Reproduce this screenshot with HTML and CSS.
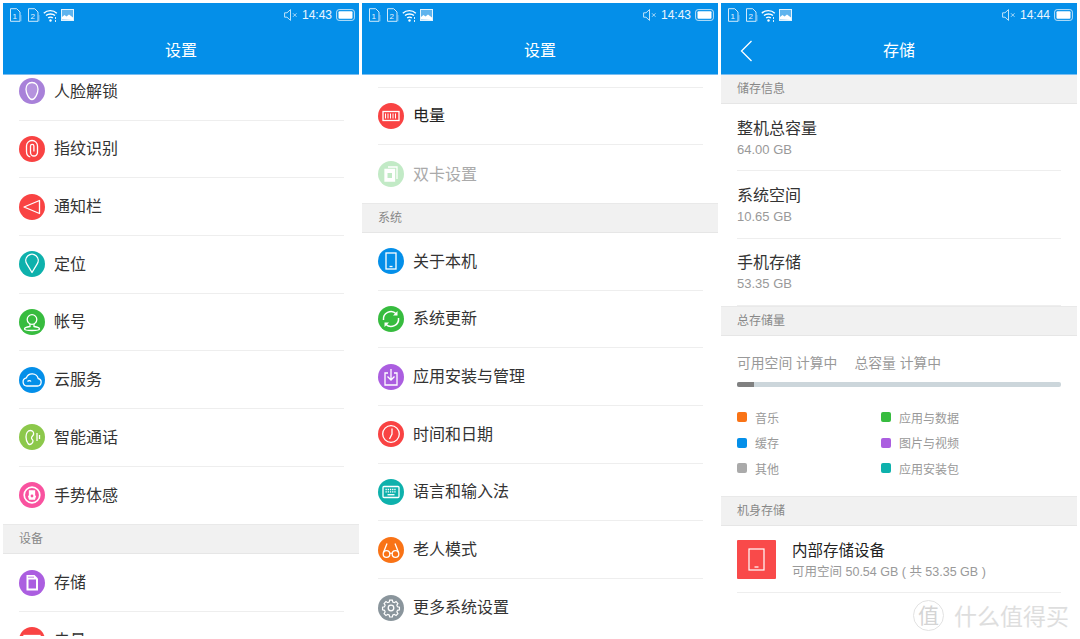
FILE: index.html
```html
<!DOCTYPE html>
<html lang="zh-CN">

<head>
    <meta http-equiv="Content-Type" content="text/html; charset=utf-8" />
    <title>设置</title>
    <link rel="stylesheet" href="styles.css">
</head>

<body>
    <svg class="defs" aria-hidden="true">
        <symbol id="sim" viewBox="0 0 13 14">
            <path d="M1.5 .7h6.2l3.3 3.3v9.3h-9.5z" fill="none" stroke="#cfe9fb" stroke-width="1" />
            <path d="M11.8 7v6.3" stroke="#7fc2f0" stroke-width="1.2" />
        </symbol>
        <symbol id="wifi" viewBox="0 0 15 13">
            <path d="M.8 4.2c3.6-3.4 9.4-3.4 13 0M3 6.6c2.4-2.2 6.6-2.2 9 0M5.2 9c1.2-1.1 3.4-1.1 4.6 0" fill="none" stroke="#fff" stroke-width="1.4" />
            <circle cx="7.5" cy="11.5" r="1.2" fill="#fff" />
            <path d="M12.5 8v2M12.5 11v2" stroke="#d9effc" stroke-width="1" />
        </symbol>
        <symbol id="pic" viewBox="0 0 13 12">
            <rect x=".5" y=".5" width="12" height="11" fill="#5fb4ee" stroke="#e2f2fc" />
            <path d="M1 10.5V8l2.5-2 2 1.5 2.5-2 4 3v2.5z" fill="#fff" />
        </symbol>
        <symbol id="mute" viewBox="0 0 14 12">
            <path d="M.6 3.8H3L6.5 .6v10.8L3 8.2H.6z" fill="none" stroke="#d5ecfb" stroke-width=".9" />
            <path d="M9 4.3l3.5 3.5M12.5 4.3L9 7.8" stroke="#d5ecfb" stroke-width=".8" />
        </symbol>
        <symbol id="batt" viewBox="0 0 19 12">
            <rect x=".6" y=".6" width="17.8" height="10.8" rx="2.5" fill="none" stroke="#bfe2f9" stroke-width="1" />
            <rect x="2.5" y="2.3" width="14" height="7.4" rx="1" fill="#fff" />
        </symbol>
    </svg>

    <div class="screens">
        <section class="phone">
            <header class="topbar">
                <div class="status">
                    <svg class="s-sim" viewBox="0 0 13 14"><use href="#sim" /><text x="5.8" y="10.5">1</text></svg>
                    <svg class="s-sim" viewBox="0 0 13 14"><use href="#sim" /><text x="5.8" y="10.5">2</text></svg>
                    <svg class="s-wifi"><use href="#wifi" /></svg>
                    <svg class="s-pic"><use href="#pic" /></svg>
                    <span class="status-right">
                        <svg class="s-mute"><use href="#mute" /></svg>
                        <span class="time">14:43</span>
                        <svg class="s-batt"><use href="#batt" /></svg>
                    </span>
                </div>
                <div class="title">设置</div>
            </header>
            <div class="list">
                <div class="row row-face"><span class="icon c-lilac"><svg viewBox="0 0 26 26"><path class="tint" d="M13 4.5c-3.8 0-6 3-6 6.8 0 4 3 10.2 6 10.2s6-6.2 6-10.2c0-3.8-2.2-6.8-6-6.800z" /></svg></span><span class="row-text">人脸解锁</span></div>
                <div class="row"><span class="icon c-red"><svg viewBox="0 0 26 26"><path d="M7.5 15.5V10a5.5 5.5 0 0 1 11 0v6.500a3.5 3.5 0 0 1-7 0V10a1.700 1.700 0 0 1 3.400 0v5.500M7.5 15.500c0 2.800 1.500 4.800 3.800 5.500" /></svg></span><span class="row-text">指纹识别</span></div>
                <div class="row"><span class="icon c-red"><svg viewBox="0 0 26 26"><path d="M20.5 6.5v13L5 13z" stroke-linejoin="round" /></svg></span><span class="row-text">通知栏</span></div>
                <div class="row"><span class="icon c-teal"><svg viewBox="0 0 26 26"><path d="M13 21.5L7.8 12.8a6.2 6.2 0 1 1 10.4 0z" stroke-linejoin="round" /></svg></span><span class="row-text">定位</span></div>
                <div class="row"><span class="icon c-green"><svg viewBox="0 0 26 26"><circle cx="13" cy="10.5" r="4.8" /><path d="M11 15v2.5c-2 .3-5.5 1-5.5 2.5s4 1.5 7.5 1.5 7.5 0 7.5-1.5-3.5-2.2-5.5-2.5V15" /></svg></span><span class="row-text">帐号</span></div>
                <div class="row"><span class="icon c-blue"><svg viewBox="0 0 26 26"><path d="M8 19h10.5a3.8 3.8 0 0 0 .7-7.5 6.3 6.3 0 0 0-11.9-.6A4.1 4.1 0 0 0 8 19z" /><path d="M8.5 14.5c1-1.2 2.7-1.2 3.5 0" /></svg></span><span class="row-text">云服务</span></div>
                <div class="row"><span class="icon c-lime"><svg viewBox="0 0 26 26"><path d="M9 19.5c-1.3-2-2-4-2-6.5 0-3.5 1.8-6.5 4.5-6.5 2.3 0 3.5 2 3 4-.4 1.5-2 1.8-2 3.5 0 1.3 1.5 1.5 1.5 3 0 2-2 3.5-3.500 3.500-.5 0-1-.4-1.500-1z" /><path d="M18 9v8M20.5 11v4" /></svg></span><span class="row-text">智能通话</span></div>
                <div class="row row-end"><span class="icon c-pink"><svg viewBox="0 0 26 26"><circle cx="13" cy="13" r="7.8" stroke-width="1.7" /><path class="solid" d="M10.5 13.5V9h5v4.500l.8 1-.8 2.500h-5l-.8-2.500z" /><circle class="pink-dot" cx="13" cy="14" r="1.4" /></svg></span><span class="row-text">手势体感</span></div>
                <div class="section">设备</div>
                <div class="row"><span class="icon c-violet"><svg viewBox="0 0 26 26"><path class="solid nostroke" d="M7.5 5h8L19 8.5v12H7.5z" /><path class="hole" d="M9.5 9.5H17v9H9.5z" /><path class="hole" d="M9.5 6.500h1V8h-1zM11.500 6.500h1V8h-1zM13.500 6.500h1V8h-1z" /></svg></span><span class="row-text">存储</span></div>
                <div class="row"><span class="icon c-red"><svg viewBox="0 0 26 26"><rect x="5" y="8.5" width="16" height="9" /><path d="M7.5 10.500v5M10 10.500v5M12.500 10.500v5M15 10.500v5M17.500 10.500v5" stroke-width="1" /></svg></span><span class="row-text">电量</span></div>
            </div>
        </section>

        <section class="phone">
            <header class="topbar">
                <div class="status">
                    <svg class="s-sim" viewBox="0 0 13 14"><use href="#sim" /><text x="5.8" y="10.5">1</text></svg>
                    <svg class="s-sim" viewBox="0 0 13 14"><use href="#sim" /><text x="5.8" y="10.5">2</text></svg>
                    <svg class="s-wifi"><use href="#wifi" /></svg>
                    <svg class="s-pic"><use href="#pic" /></svg>
                    <span class="status-right">
                        <svg class="s-mute"><use href="#mute" /></svg>
                        <span class="time">14:43</span>
                        <svg class="s-batt"><use href="#batt" /></svg>
                    </span>
                </div>
                <div class="title">设置</div>
            </header>
            <div class="list">
                <div class="row row-store"></div>
                <div class="row"><span class="icon c-red"><svg viewBox="0 0 26 26"><rect x="5" y="8.5" width="16" height="9" /><path d="M7.5 10.500v5M10 10.500v5M12.500 10.500v5M15 10.500v5M17.500 10.500v5" stroke-width="1" /></svg></span><span class="row-text row-dark">电量</span></div>
                <div class="row row-end row-off"><span class="icon c-pale"><svg viewBox="0 0 26 26"><path d="M10 6h9v12" /><path class="solid" d="M7 8.5h9.5V20H7z" /><path class="hole" d="M9.5 12H14v5H9.5z" /></svg></span><span class="row-text">双卡设置</span></div>
                <div class="section">系统</div>
                <div class="row"><span class="icon c-blue"><svg viewBox="0 0 26 26"><rect x="8" y="5" width="10" height="16" /><path d="M11.5 18.500h3" /></svg></span><span class="row-text">关于本机</span></div>
                <div class="row"><span class="icon c-green"><svg viewBox="0 0 26 26"><path d="M5.5 14a7.5 7.5 0 0 1 12.700-6.300M20.500 12a7.500 7.500 0 0 1-12.700 6.300" stroke-width="1.5" /><path class="solid nostroke" d="M19.500 5v4.500H15zM6.500 21v-4.500H11z" /></svg></span><span class="row-text">系统更新</span></div>
                <div class="row"><span class="icon c-violet"><svg viewBox="0 0 26 26"><path d="M10 9H7v12h12V9h-3" /><path d="M13 5v11M9.5 12.500L13 16l3.500-3.500" /></svg></span><span class="row-text">应用安装与管理</span></div>
                <div class="row"><span class="icon c-red"><svg viewBox="0 0 26 26"><circle cx="13" cy="13" r="8.3" /><path d="M14 7.5V13l-2.500 5" /></svg></span><span class="row-text">时间和日期</span></div>
                <div class="row"><span class="icon c-teal"><svg viewBox="0 0 26 26"><rect x="5" y="7.5" width="16" height="11" rx="1" /><path d="M7.5 10.500h11M7.500 12.800h11" stroke-width="1.3" stroke-dasharray="1.3 .9" /><path d="M9.5 15.700h7" /></svg></span><span class="row-text">语言和输入法</span></div>
                <div class="row"><span class="icon c-orange"><svg viewBox="0 0 26 26"><circle cx="8.5" cy="17" r="3.3" /><circle cx="17.5" cy="17" r="3.3" /><path d="M11.800 16.500c.8-.5 1.600-.5 2.400 0M5.500 15.500L9 6.500M20.500 15.500L17 6.500" /></svg></span><span class="row-text">老人模式</span></div>
                <div class="row row-end"><span class="icon c-grey"><svg viewBox="0 0 26 26"><circle cx="13" cy="13" r="2.8" /><path d="M11.500 5.500h3l.5 2.200 1.700.7 1.900-1.200 2.100 2.100-1.200 1.900.7 1.700 2.200.5v3l-2.200.5-.7 1.700 1.200 1.900-2.100 2.100-1.900-1.200-1.700.7-.5 2.200h-3l-.5-2.200-1.700-.7-1.900 1.200-2.100-2.100 1.200-1.900-.7-1.700-2.200-.5v-3l2.200-.5.7-1.700-1.200-1.900 2.100-2.100 1.900 1.200 1.700-.7z" transform="translate(1.300 .1) scale(.9)" /></svg></span><span class="row-text">更多系统设置</span></div>
            </div>
        </section>

        <section class="phone">
            <header class="topbar">
                <div class="status">
                    <svg class="s-sim" viewBox="0 0 13 14"><use href="#sim" /><text x="5.8" y="10.5">1</text></svg>
                    <svg class="s-sim" viewBox="0 0 13 14"><use href="#sim" /><text x="5.8" y="10.5">2</text></svg>
                    <svg class="s-wifi"><use href="#wifi" /></svg>
                    <svg class="s-pic"><use href="#pic" /></svg>
                    <span class="status-right">
                        <svg class="s-mute"><use href="#mute" /></svg>
                        <span class="time">14:44</span>
                        <svg class="s-batt"><use href="#batt" /></svg>
                    </span>
                </div>
                <div class="title">
                    <svg class="back" viewBox="0 0 13 22"><path d="M11.500 1L1.500 11l10 10" /></svg>
                    存储
                </div>
            </header>
            <div class="list">
                <div class="section section-first">储存信息</div>
                <div class="info"><div class="info-name">整机总容量</div><div class="info-val">64.00 GB</div></div>
                <div class="info"><div class="info-name">系统空间</div><div class="info-val">10.65 GB</div></div>
                <div class="info row-end"><div class="info-name">手机存储</div><div class="info-val">53.35 GB</div></div>
                <div class="section">总存储量</div>
                <div class="usage">
                    <div class="usage-text"><span>可用空间 计算中</span><span>总容量 计算中</span></div>
                    <div class="bar"><div class="bar-fill"></div></div>
                    <div class="legend">
                        <div class="legend-item"><i class="c-orange"></i>音乐</div>
                        <div class="legend-item"><i class="c-green"></i>应用与数据</div>
                        <div class="legend-item"><i class="c-blue"></i>缓存</div>
                        <div class="legend-item"><i class="c-violet"></i>图片与视频</div>
                        <div class="legend-item"><i class="c-silver"></i>其他</div>
                        <div class="legend-item"><i class="c-teal"></i>应用安装包</div>
                    </div>
                </div>
                <div class="section">机身存储</div>
                <div class="device">
                    <span class="tile"><svg viewBox="0 0 39 39"><rect x="12" y="9" width="15" height="21" /><path d="M17.500 27h4" /></svg></span>
                    <div class="device-text">
                        <div class="device-name">内部存储设备</div>
                        <div class="device-val">可用空间 50.54 GB ( 共 53.35 GB )</div>
                    </div>
                </div>
            </div>
            <div class="mark"><span class="mark-logo">值</span>什么值得买</div>
        </section>
    </div>
</body>

</html>
```
FILE: styles.css
```css
* {
    box-sizing: border-box;
}

html,
body {
    margin: 0;
    height: 100%;
    background-color: #fff;
}

body {
    font-family: "Liberation Sans", "Noto Sans CJK SC", sans-serif;
    color: #333;
    overflow: hidden;
}

.defs {
    position: absolute;
    width: 0;
    height: 0;
}

.screens {
    display: flex;
    gap: 3px;
    padding: 3px;
    height: 639px;
}

.phone {
    position: relative;
    display: flex;
    flex-direction: column;
    width: 356px;
    overflow: hidden;
}

/* top bar */
.topbar {
    flex: none;
    height: 72px;
    background-color: #048fe9;
    border-bottom: 1px solid #79bdf0;
    color: #fff;
}

.status {
    display: flex;
    align-items: center;
    height: 24px;
    padding: 0 4px 0 6px;
}

.status svg {
    display: block;
    flex: none;
}

.s-sim {
    width: 13px;
    height: 14px;
    margin-right: 5px;
}

.s-sim text {
    font-size: 8px;
    fill: #e6f4fd;
    text-anchor: middle;
}

.s-wifi {
    width: 15px;
    height: 13px;
    margin: 0 3px 0 -2px;
}

.s-pic {
    width: 13px;
    height: 12px;
}

.status-right {
    display: flex;
    align-items: center;
    margin-left: auto;
}

.s-mute {
    width: 14px;
    height: 12px;
    margin-right: 4px;
}

.time {
    font-size: 12px;
    margin-right: 4px;
    color: #eaf6fe;
}

.s-batt {
    width: 19px;
    height: 12px;
}

.title {
    position: relative;
    height: 47px;
    line-height: 47px;
    text-align: center;
    font-size: 16px;
}

.back {
    position: absolute;
    left: 19px;
    top: 13px;
    width: 13px;
    height: 22px;
    fill: none;
    stroke: #fff;
    stroke-width: 1.3;
}

/* lists */
.list {
    flex: 1;
    min-height: 0;
    overflow: hidden;
}

.row {
    display: flex;
    align-items: center;
    gap: 9px;
    height: 57.7px;
    margin: 0 15px 0 16px;
    border-bottom: 1px solid #eee;
    font-size: 16px;
    color: #333;
}

.row-text {
    padding-bottom: 3px;
}

.row-dark {
    color: #222;
}

.row-face {
    margin-top: -12.2px;
}

.row-store {
    margin-top: -45.2px;
}

.row-end {
    border-bottom: none;
}

.row-off {
    color: #aaa;
}

.section {
    height: 30px;
    line-height: 28px;
    padding-left: 16px;
    font-size: 12px;
    color: #888;
    background-color: #f1f1f1;
    border-top: 1px solid #e9e9e9;
    border-bottom: 1px solid #e6e6e6;
}

.section-first {
    height: 29px;
    line-height: 28px;
    border-top: none;
}

.icon {
    flex: none;
    width: 26px;
    height: 26px;
    border-radius: 50%;
}

.icon svg {
    display: block;
    width: 26px;
    height: 26px;
    fill: none;
    stroke: #fff;
    stroke-width: 1.3;
}

.icon .solid {
    fill: #fff;
}

.icon .tint {
    fill: rgba(255, 255, 255, 0.15);
}

.icon .nostroke {
    stroke: none;
}

.icon .hole {
    fill: #ab5ee0;
    stroke: none;
}

.icon .pink-dot {
    fill: #f9529f;
    stroke: none;
}

.c-pale .hole {
    fill: #c2eac6;
}

.c-lilac { background-color: #a881d9; }
.c-red { background-color: #f94343; }
.c-teal { background-color: #0eb1ac; }
.c-green { background-color: #37bc3f; }
.c-blue { background-color: #048fe9; }
.c-lime { background-color: #8cc84b; }
.c-pink { background-color: #f9529f; }
.c-violet { background-color: #ab5ee0; }
.c-pale { background-color: #c2eac6; }
.c-orange { background-color: #f97316; }
.c-grey { background-color: #8a959c; }
.c-silver { background-color: #aaa; }

/* storage screen */
.info {
    height: 67.4px;
    margin: 0 16px;
    padding-top: 13.6px;
    border-bottom: 1px solid #eee;
}

.info-name {
    font-size: 16px;
    line-height: 22px;
    color: #333;
}

.info-val {
    font-size: 13px;
    line-height: 20px;
    color: #999;
}

.usage {
    padding: 18px 16px 15px;
}

.usage-text {
    display: flex;
    gap: 17px;
    font-size: 13.8px;
    line-height: 20px;
    color: #999;
}

.bar {
    height: 5px;
    margin-top: 8px;
    border-radius: 2px;
    background-color: #ccd6db;
    overflow: hidden;
}

.bar-fill {
    width: 17px;
    height: 100%;
    background-color: #808080;
}

.legend {
    display: grid;
    grid-template-columns: 144px 1fr;
    grid-auto-rows: 25.7px;
    margin-top: 17px;
}

.legend-item {
    display: flex;
    align-items: center;
    gap: 8px;
    font-size: 12px;
    color: #999;
}

.legend-item i {
    width: 10px;
    height: 10px;
    border-radius: 2px;
}

.device {
    display: flex;
    align-items: center;
    gap: 16px;
    height: 67px;
    margin: 0 16px;
    border-bottom: 1px solid #eee;
}

.tile {
    flex: none;
    width: 39px;
    height: 39px;
    border-radius: 1px;
    background-color: #f94a4a;
}

.tile svg {
    display: block;
    fill: none;
    stroke: #fff;
    stroke-width: 1.2;
}

.device-text {
    padding-top: 4px;
}

.device-name {
    font-size: 15.5px;
    line-height: 22px;
    color: #222;
}

.device-val {
    font-size: 12.5px;
    line-height: 20px;
    color: #999;
}

/* watermark over the corner */
.mark {
    position: absolute;
    right: 8px;
    bottom: 4px;
    display: flex;
    align-items: center;
    gap: 10px;
    font-size: 23px;
    color: #dedede;
}

.mark-logo {
    width: 31px;
    height: 31px;
    line-height: 29px;
    text-align: center;
    font-size: 21px;
    border: 1px solid #e2e2e2;
    border-radius: 50%;
    color: #d4d4d4;
}
```
